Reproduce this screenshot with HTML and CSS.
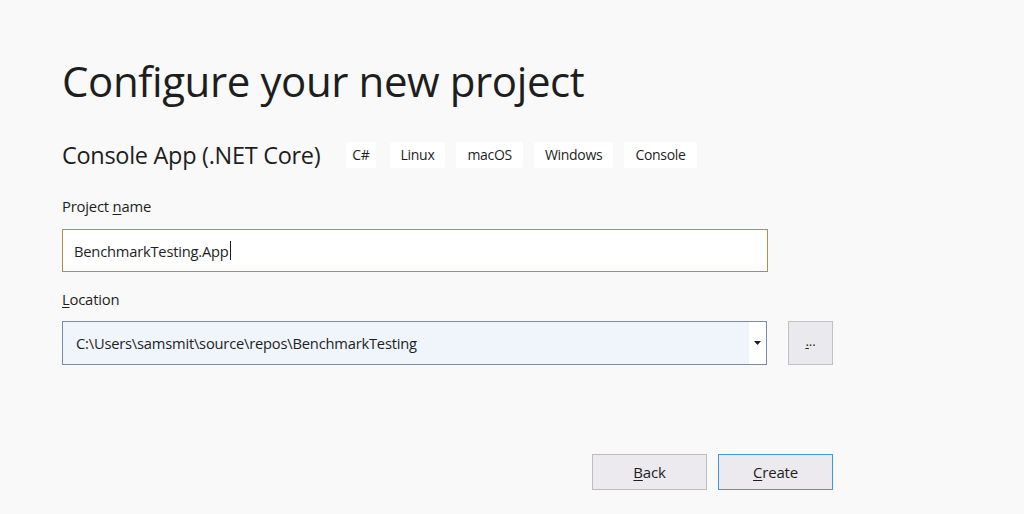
FILE: index.html
```html
<!DOCTYPE html>
<html>
<head>
<meta charset="utf-8">
<link rel="stylesheet" href="styles.css">
</head>
<body>
<div class="page">
  <h1 class="title">Configure your new project</h1>
  <div class="subtitle-row">
    <span class="subtitle">Console App (.NET Core)</span>
    <div class="tags">
      <span class="tag tag-cs">C#</span>
      <span class="tag">Linux</span>
      <span class="tag">macOS</span>
      <span class="tag">Windows</span>
      <span class="tag">Console</span>
    </div>
  </div>
  <label class="label label-name">Project <u>n</u>ame</label>
  <div class="input"><span class="input-text">BenchmarkTesting.App</span><span class="caret"></span></div>
  <label class="label label-loc"><u>L</u>ocation</label>
  <div class="loc-row">
    <div class="select">
      <span class="select-text">C:\Users\samsmit\source\repos\BenchmarkTesting</span>
      <span class="select-arrow"><svg width="7" height="4" viewBox="0 0 7 4"><path d="M0 0H7L3.5 4Z" fill="#1e1e1e"/></svg></span>
    </div>
    <div class="browse"><span class="dots"><u>.</u>..</span></div>
  </div>
  <div class="actions">
    <div class="btn"><u>B</u>ack</div>
    <div class="btn btn-primary"><u>C</u>reate</div>
  </div>
</div>
</body>
</html>
```
FILE: styles.css
```css
* { box-sizing: border-box; }
html, body { margin: 0; padding: 0; }
body {
  background: #f9f9f9;
  font-family: "Open Sans", "Noto Sans", sans-serif;
  color: #1e1e1e;
  width: 1024px;
  height: 514px;
  overflow: hidden;
}
.page {
  padding: 52px 0 0 62px;
  width: 833px;
}
.title {
  margin: 0;
  font-weight: 400;
  font-size: 42px;
  line-height: 58px;
  letter-spacing: -0.4px;
  color: #1e1e1e;
}
.subtitle-row {
  display: flex;
  align-items: center;
  margin-top: 32px;
  height: 26px;
}
.subtitle {
  font-size: 23.5px;
  letter-spacing: -0.3px;
  margin-right: 26px;
}
.tags { display: flex; gap: 11px; }
.tag {
  background: #ffffff;
  border-radius: 3px;
  height: 26px;
  line-height: 26px;
  padding: 0 11px;
  font-size: 14px;
  letter-spacing: -0.3px;
}
.tag-cs { padding: 0 6px; margin-right: 3px; }
.label {
  display: block;
  font-size: 14.8px;
  letter-spacing: -0.2px;
}
.label u, .btn u, .dots u { text-decoration-thickness: 1px; text-underline-offset: 2px; }
.label-name { margin-top: 28px; line-height: 20px; }
.input {
  margin-top: 13px;
  width: 706px;
  height: 43px;
  border: 1px solid #b3904a;
  background: #ffffff;
  display: flex;
  align-items: center;
  padding-left: 11px;
  font-size: 14.7px;
  letter-spacing: -0.2px;
}
.caret {
  display: inline-block;
  width: 1px;
  height: 19px;
  background: #1e1e1e;
  margin-left: 1px;
}
.label-loc { margin-top: 17px; line-height: 20px; }
.loc-row {
  display: flex;
  margin-top: 12px;
  gap: 21px;
}
.select {
  width: 706px;
  height: 44px;
  border: 1px solid #7f8aa4;
  background: #f0f4fb;
  display: flex;
  align-items: center;
  font-size: 14.7px;
  letter-spacing: -0.2px;
}
.select-text { flex: 1; padding-left: 13px; }
.select-arrow {
  width: 17px;
  height: 100%;
  background: #ffffff;
  display: flex;
  align-items: center;
  justify-content: center;
}
.select-arrow svg { display: block; margin-left: -1px; }
.browse {
  width: 45px;
  height: 44px;
  border: 1px solid #c1c1c1;
  background: #eaeaee;
  display: flex;
  align-items: center;
  justify-content: center;
  font-size: 13px;
}
.dots { margin-top: -4px; letter-spacing: 0; }
.actions {
  display: flex;
  justify-content: flex-end;
  gap: 11px;
  margin-top: 89px;
}
.btn {
  width: 115px;
  height: 36px;
  border: 1px solid #bdbdbd;
  background: #eceaef;
  display: flex;
  align-items: center;
  justify-content: center;
  font-size: 15px;
  letter-spacing: -0.2px;
}
.btn-primary { border-color: #3a99e8; }
```
